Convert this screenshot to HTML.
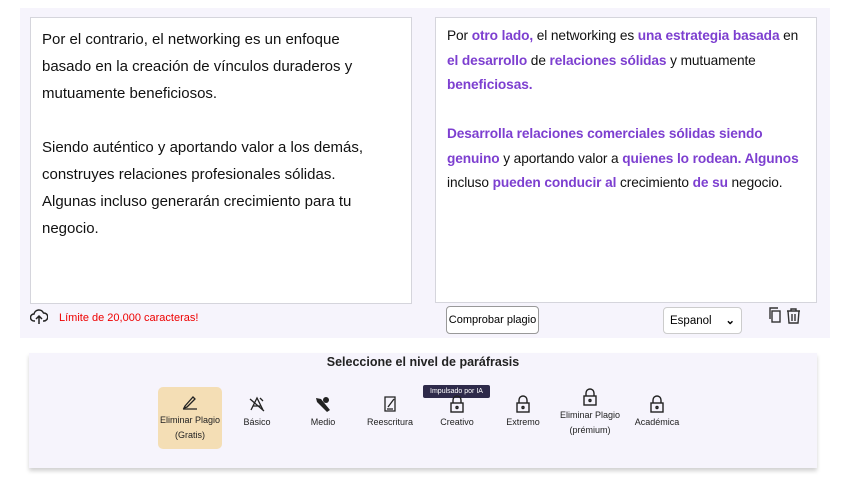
<!DOCTYPE html>
<html><head><meta charset="utf-8"><style>
*{margin:0;padding:0;box-sizing:border-box}
body{width:846px;height:481px;background:#fff;font-family:"Liberation Sans",Arial,sans-serif;position:relative;overflow:hidden}
.outer{position:absolute;left:20px;top:8px;width:810px;height:330px;background:#f6f4fc}
.box{position:absolute;background:#fff;border:1px solid #d5d5dc}
.l{left:30px;top:17px;width:382px;height:287px;padding:8px 39px 0 11px;font-size:15px;line-height:27px;color:#111}
.r{left:435px;top:17px;width:382px;height:286px;padding:6px 6px 0 11px;font-size:13.7px;line-height:24.5px;color:#111;letter-spacing:-0.1px}
.r b{color:#7d3fd0}
.lim{position:absolute;left:59px;top:312px;font-size:11px;color:#e00}
.btn{position:absolute;left:446px;top:306px;width:93px;height:28px;border:1px solid #999;border-radius:4px;background:#fff;font-size:11px;text-align:center;line-height:26px;white-space:nowrap}
.sel{position:absolute;left:663px;top:307px;width:79px;height:27px;border:1px solid #ccc;border-radius:4px;background:#fff;font-size:11.5px;line-height:26px;padding-left:6px}
.bot{position:absolute;left:29px;top:353px;width:788px;height:115px;background:#f6f4fc;box-shadow:0 3px 4px rgba(0,0,0,.18)}
.ttl{position:absolute;left:0;width:846px;top:355px;text-align:center;font-size:12.5px;font-weight:bold;color:#222}
.it{position:absolute;top:387px;width:64px;height:62px;text-align:center;font-size:9px;color:#222;line-height:15px}
.it svg{display:block;margin:8px auto 2px}
.tip{position:absolute;left:423px;top:385px;width:67px;height:13px;background:#2e2a4a;color:#fff;font-size:7px;text-align:center;line-height:13px;border-radius:2px}
</style></head><body>
<div class="outer"></div>
<div class="box l">Por el contrario, el networking es un enfoque basado en la creación de vínculos duraderos y mutuamente beneficiosos.<br><br>Siendo auténtico y aportando valor a los demás, construyes relaciones profesionales sólidas. Algunas incluso generarán crecimiento para tu negocio.</div>
<div class="box r">Por <b>otro lado,</b> el networking es <b>una estrategia basada</b> en <b>el desarrollo</b> de <b>relaciones sólidas</b> y mutuamente <b>beneficiosas.</b><br><br><b>Desarrolla relaciones comerciales sólidas siendo genuino</b> y aportando valor a <b>quienes lo rodean. Algunos</b> incluso <b>pueden conducir al</b> crecimiento <b>de su</b> negocio.</div>
<svg style="position:absolute;left:30px;top:309px" width="18" height="16" viewBox="0 0 18 16" fill="none" stroke="#222" stroke-width="1.5"><path d="M5 12H4a3.5 3.5 0 0 1 0-7 5 5 0 0 1 9.5-1A3.8 3.8 0 0 1 14 12h-1"/><path d="M9 15V7M6 10l3-3 3 3"/></svg>
<div class="lim">Límite de 20,000 caracteras!</div>
<div class="btn">Comprobar plagio</div>
<div class="sel">Espanol <span style="position:absolute;right:6px;font-weight:bold">⌄</span></div>
<svg style="position:absolute;left:768px;top:307px" width="34" height="17" viewBox="0 0 34 17" fill="none" stroke="#333" stroke-width="1.4"><path d="M2 12V1h8"/><rect x="4" y="4" width="8" height="11"/><path d="M19 4h13M23 4V2h5v2M20 4l1 12h9l1-12M24 7v7M27 7v7"/></svg>
<div class="bot"></div>
<div class="ttl">Seleccione el nivel de paráfrasis</div>
<div class="it" style="left:158px;background:#f4deb5;border-radius:5px;height:62px"><svg width="18" height="16" viewBox="0 0 18 16" fill="none" stroke="#222" stroke-width="1.3"><path d="M4 11l8-9 2 2-8 8-3 1zM2 14h14"/></svg>Eliminar Plagio<br>(Gratis)</div>
<div class="it" style="left:225px"><svg width="18" height="18" viewBox="0 0 18 18" fill="none" stroke="#222" stroke-width="1.3"><path d="M3 15L9 3l6 12M5 11h8M2 4l14 12M12 3l3 3"/></svg>Básico</div>
<div class="it" style="left:291px"><svg width="18" height="18" viewBox="0 0 18 18" fill="#222"><path d="M2 3l5 1 9 11-3 2-10-10z"/><circle cx="12" cy="5" r="3"/></svg>Medio</div>
<div class="it" style="left:358px"><svg width="18" height="18" viewBox="0 0 18 18" fill="none" stroke="#222" stroke-width="1.3"><path d="M4 2h10v14H4zM7 12l6-8M6 14h6"/></svg>Reescritura</div>
<div class="tip">Impulsado por IA</div>
<div class="it" style="left:425px"><svg width="16" height="18" viewBox="0 0 16 18" fill="none" stroke="#222" stroke-width="1.4"><path d="M4 8V5a4 4 0 0 1 8 0v3"/><rect x="2" y="8" width="12" height="9"/><circle cx="8" cy="12.5" r="1"/></svg>Creativo</div>
<div class="it" style="left:491px"><svg width="16" height="18" viewBox="0 0 16 18" fill="none" stroke="#222" stroke-width="1.4"><path d="M4 8V5a4 4 0 0 1 8 0v3"/><rect x="2" y="8" width="12" height="9"/><circle cx="8" cy="12.5" r="1"/></svg>Extremo</div>
<div class="it" style="left:558px;top:380px"><svg width="16" height="18" viewBox="0 0 16 18" fill="none" stroke="#222" stroke-width="1.4"><path d="M4 8V5a4 4 0 0 1 8 0v3"/><rect x="2" y="8" width="12" height="9"/><circle cx="8" cy="12.5" r="1"/></svg>Eliminar Plagio<br>(prémium)</div>
<div class="it" style="left:625px"><svg width="16" height="18" viewBox="0 0 16 18" fill="none" stroke="#222" stroke-width="1.4"><path d="M4 8V5a4 4 0 0 1 8 0v3"/><rect x="2" y="8" width="12" height="9"/><circle cx="8" cy="12.5" r="1"/></svg>Académica</div>
</body></html>
